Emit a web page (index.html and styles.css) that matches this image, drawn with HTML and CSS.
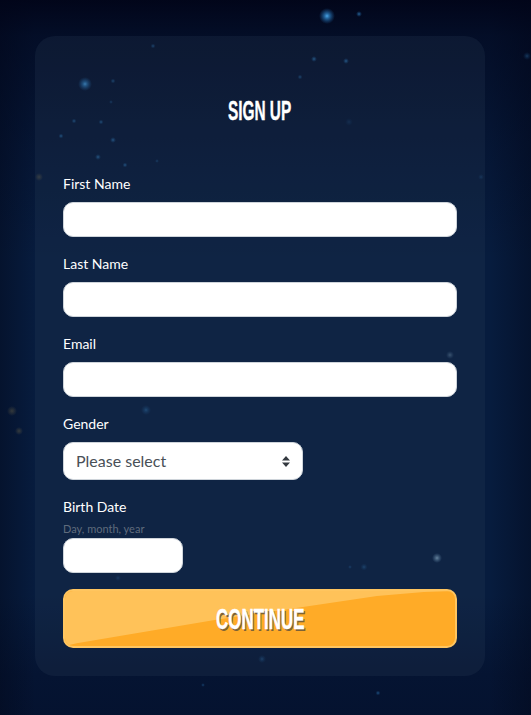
FILE: index.html
```html
<!DOCTYPE html>
<html lang="en">
<head>
<meta charset="utf-8">
<title>Sign Up</title>
<link rel="stylesheet" href="styles.css">
</head>
<body>
<svg class="sky" width="531" height="715" viewBox="0 0 531 715" aria-hidden="true">
  <defs>
    <radialGradient id="glow">
      <stop offset="0" stop-color="#4aa6e8"/>
      <stop offset=".35" stop-color="#2a78b8" stop-opacity=".75"/>
      <stop offset="1" stop-color="#1c5a96" stop-opacity="0"/>
    </radialGradient>
    <radialGradient id="soft">
      <stop offset="0" stop-color="#8fb0c8" stop-opacity=".8"/>
      <stop offset="1" stop-color="#5a86a8" stop-opacity="0"/>
    </radialGradient>
    <radialGradient id="amber">
      <stop offset="0" stop-color="#8a7a4a" stop-opacity=".35"/>
      <stop offset="1" stop-color="#8a7a4a" stop-opacity="0"/>
    </radialGradient>
  </defs>
  <circle cx="327" cy="16" r="8" fill="url(#glow)"/>
  <circle cx="359" cy="14" r="3" fill="url(#glow)" opacity=".6"/>
  <circle cx="85" cy="84" r="7" fill="url(#glow)" opacity=".8"/>
  <circle cx="113" cy="81" r="2.5" fill="url(#glow)" opacity=".4"/>
  <circle cx="153" cy="46" r="2.5" fill="url(#glow)" opacity=".4"/>
  <circle cx="314" cy="59" r="3" fill="url(#glow)" opacity=".55"/>
  <circle cx="346" cy="61" r="3" fill="url(#glow)" opacity=".55"/>
  <circle cx="300" cy="77" r="2.5" fill="url(#glow)" opacity=".4"/>
  <circle cx="74" cy="121" r="2.5" fill="url(#glow)" opacity=".45"/>
  <circle cx="101" cy="122" r="2.5" fill="url(#glow)" opacity=".45"/>
  <circle cx="61" cy="136" r="2.5" fill="url(#glow)" opacity=".5"/>
  <circle cx="113" cy="140" r="3" fill="url(#glow)" opacity=".5"/>
  <circle cx="98" cy="157" r="3" fill="url(#glow)" opacity=".5"/>
  <circle cx="125" cy="165" r="2.5" fill="url(#glow)" opacity=".5"/>
  <circle cx="157" cy="161" r="2" fill="url(#glow)" opacity=".3"/>
  <circle cx="111" cy="102" r="2" fill="url(#glow)" opacity=".3"/>
  <circle cx="146" cy="410" r="5" fill="url(#glow)" opacity=".35"/>
  <circle cx="450" cy="355" r="4" fill="url(#soft)" opacity=".5"/>
  <circle cx="437" cy="558" r="5" fill="url(#soft)"/>
  <circle cx="364" cy="567" r="3.5" fill="url(#glow)" opacity=".3"/>
  <circle cx="350" cy="567" r="2" fill="url(#glow)" opacity=".3"/>
  <circle cx="262" cy="659" r="4" fill="url(#glow)" opacity=".3"/>
  <circle cx="378" cy="693" r="2.5" fill="url(#glow)" opacity=".45"/>
  <circle cx="203" cy="685" r="2" fill="url(#glow)" opacity=".35"/>
  <circle cx="481" cy="177" r="3" fill="url(#glow)" opacity=".2"/>
  <circle cx="349" cy="122" r="4" fill="url(#glow)" opacity=".15"/>
  <circle cx="118" cy="578" r="3" fill="url(#glow)" opacity=".2"/>
  <circle cx="140" cy="591" r="2" fill="url(#glow)" opacity=".3"/>
  <circle cx="12" cy="411" r="5" fill="url(#amber)"/>
  <circle cx="19" cy="431" r="4" fill="url(#amber)"/>
  <circle cx="39" cy="177" r="4" fill="url(#amber)"/>
  <circle cx="527" cy="56" r="4" fill="url(#glow)" opacity=".3"/>
</svg>
<main class="card">
  <h1 class="title"><span class="squeeze">SIGN UP</span></h1>
  <form class="form">
    <div class="field">
      <label class="label" for="first">First Name</label>
      <input class="input" id="first" type="text">
    </div>
    <div class="field">
      <label class="label" for="last">Last Name</label>
      <input class="input" id="last" type="text">
    </div>
    <div class="field">
      <label class="label" for="email">Email</label>
      <input class="input" id="email" type="text">
    </div>
    <div class="field field-select">
      <label class="label" for="gender">Gender</label>
      <div class="select" id="gender">
        <span class="select-text">Please select</span>
        <svg width="8" height="11" viewBox="0 0 8 11" aria-hidden="true"><path d="M4 0 8 4.4H0zM4 11 0 6.6h8z" fill="#343a40"/></svg>
      </div>
    </div>
    <div class="field field-date">
      <label class="label" for="birth">Birth Date</label>
      <small class="hint">Day, month, year</small>
      <input class="input input-short" id="birth" type="text">
    </div>
    <button class="button" type="button"><span class="squeeze squeeze-btn">CONTINUE</span></button>
  </form>
</main>
</body>
</html>
```

FILE: styles.css
```css
* { box-sizing: border-box; }
html, body { margin: 0; height: 715px; overflow: hidden; }
body {
  position: relative;
  padding: 36px 0 0 35px;
  font-family: "Lato", "Liberation Sans", sans-serif;
  color: #fff;
  background:
    linear-gradient(180deg, rgba(1, 4, 24, .95) 0, rgba(1, 4, 24, .6) 36px, rgba(1, 4, 24, .25) 150px, rgba(1, 4, 24, 0) 260px),
    linear-gradient(90deg, rgba(2, 8, 26, .45) 0, rgba(2, 8, 26, 0) 35px, rgba(2, 8, 26, 0) 490px, rgba(2, 8, 26, .45) 531px),
    linear-gradient(0deg, rgba(3, 12, 38, .6) 0, rgba(3, 12, 38, .5) 40px, rgba(3, 12, 38, 0) 120px),
    #071c3e;
}
.sky { position: absolute; left: 0; top: 0; }
.card {
  position: relative;
  width: 450px;
  height: 640px;
  padding: 0 28px;
  border-radius: 20px;
  background: rgba(50, 70, 95, .2);
}
.title {
  margin: 0;
  height: 138px;
  padding-top: 58px;
  text-align: center;
  font: 700 28px/34px "Liberation Sans", sans-serif;
}
.squeeze { display: inline-block; transform: scaleX(.55); -webkit-text-stroke: .4px #fff; }
.field { display: flex; flex-direction: column; align-items: flex-start; height: 80px; }
.label { font-size: 14px; line-height: 20px; margin-bottom: 8px; }
.input {
  display: block;
  width: 100%;
  height: 35px;
  padding: 0 12px;
  border: 1px solid #ced4da;
  border-radius: 10px;
  background: #fff;
}
.select {
  display: flex;
  align-items: center;
  justify-content: space-between;
  width: 240px;
  height: 38px;
  padding: 0 12px;
  border: 1px solid #ced4da;
  border-radius: 10px;
  background: #fff;
  color: #495057;
  font-size: 16px;
}
.select-text { margin-bottom: 2px; }
.field-select { height: 83px; }
.field-date { height: 92px; }
.field-date .label { margin-bottom: 0; }
.hint { font-size: 11px; line-height: 14px; margin: 5px 0 2px; color: #5f6b7c; }
.input-short { width: 120px; }
.button {
  position: relative;
  display: block;
  width: 394px;
  height: 59px;
  padding: 0;
  overflow: hidden;
  border: 2px solid #ffc55f;
  border-radius: 10px;
  background: #ffab27;
  color: #fff;
  font: 700 30px/55px "Liberation Sans", sans-serif;
  text-shadow: 2px 2px 0 #7d6236;
}
.button::before {
  content: "";
  position: absolute;
  inset: 0;
  background: #ffc259;
  clip-path: polygon(0 100%, 3% 95%, 38% 53%, 61% 29%, 80% 9%, 92% 2%, 100% 0, 0 0);
}
.squeeze-btn { position: relative; transform: scaleX(.565); }
```
